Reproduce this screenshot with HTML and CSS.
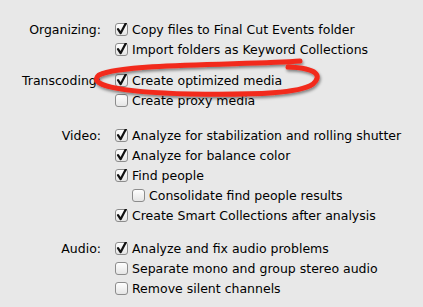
FILE: index.html
```html
<!DOCTYPE html>
<html lang="en">
<head>
    <meta charset="UTF-8">
    <title>Import Options</title>
    <link rel="stylesheet" href="styles.css">
</head>
<body>
<svg width="0" height="0" class="defs">
    <defs>
        <linearGradient id="boxfill" x1="0" y1="0" x2="0" y2="1">
            <stop offset="0" stop-color="#ffffff"/>
            <stop offset="1" stop-color="#e4e4e4"/>
        </linearGradient>
        <symbol id="box" viewBox="0 0 14 14">
            <rect x="0.5" y="0.5" width="12" height="12" rx="2.5" fill="url(#boxfill)" stroke="#8c8c8c"/>
        </symbol>
        <symbol id="tick" viewBox="0 0 14 14">
            <path d="M3 6.2 L5.6 10.2 L11.6 -1.2" fill="none" stroke="#111" stroke-width="2.2" stroke-linecap="round" stroke-linejoin="round"/>
        </symbol>
    </defs>
</svg>

<div class="prefs">
    <div class="group">
        <div class="label">Organizing:</div>
        <div class="options">
            <div class="opt"><span class="cb on"><svg><use href="#box"/><use href="#tick"/></svg></span>Copy files to Final Cut Events folder</div>
            <div class="opt"><span class="cb on"><svg><use href="#box"/><use href="#tick"/></svg></span>Import folders as Keyword Collections</div>
        </div>
    </div>

    <div class="group transcoding">
        <div class="label">Transcoding:</div>
        <div class="options">
            <div class="opt"><span class="cb on"><svg><use href="#box"/><use href="#tick"/></svg></span>Create optimized media</div>
            <div class="opt"><span class="cb"><svg><use href="#box"/></svg></span>Create proxy media</div>
        </div>
    </div>

    <div class="group video">
        <div class="label">Video:</div>
        <div class="options">
            <div class="opt"><span class="cb on"><svg><use href="#box"/><use href="#tick"/></svg></span>Analyze for stabilization and rolling shutter</div>
            <div class="opt"><span class="cb on"><svg><use href="#box"/><use href="#tick"/></svg></span>Analyze for balance color</div>
            <div class="opt"><span class="cb on"><svg><use href="#box"/><use href="#tick"/></svg></span>Find people</div>
            <div class="opt sub"><span class="cb"><svg><use href="#box"/></svg></span>Consolidate find people results</div>
            <div class="opt"><span class="cb on"><svg><use href="#box"/><use href="#tick"/></svg></span>Create Smart Collections after analysis</div>
        </div>
    </div>

    <div class="group audio">
        <div class="label">Audio:</div>
        <div class="options">
            <div class="opt"><span class="cb on"><svg><use href="#box"/><use href="#tick"/></svg></span>Analyze and fix audio problems</div>
            <div class="opt"><span class="cb"><svg><use href="#box"/></svg></span>Separate mono and group stereo audio</div>
            <div class="opt"><span class="cb"><svg><use href="#box"/></svg></span>Remove silent channels</div>
        </div>
    </div>
</div>

<svg class="scribble" width="423" height="307" viewBox="0 0 423 307">
    <defs>
        <filter id="shade" x="-10%" y="-30%" width="120%" height="160%">
            <feDropShadow dx="1" dy="2" stdDeviation="1.5" flood-color="#000" flood-opacity="0.45"/>
        </filter>
    </defs>
    <path d="M300 61 C 250 65, 125 63, 99 75 C 88 84, 112 92, 190 94 C 260 95, 300 93, 313 84 C 322 76, 318 68, 288 67"
          fill="none" stroke="#f22a1c" stroke-width="5" stroke-linecap="round" stroke-linejoin="round" filter="url(#shade)"/>
</svg>
</body>
</html>
```

FILE: styles.css
```css
body {
    margin: 0;
    background-color: #e8e8e8;
    color: #000;
    font-family: "DejaVu Sans", "Liberation Sans", sans-serif;
    font-size: 12.5px;
    width: 423px;
    height: 307px;
    overflow: hidden;
    position: relative;
}

.defs {
    position: absolute;
}

.prefs {
    padding-top: 20px;
}

.group {
    display: grid;
    grid-template-columns: 101px 1fr;
    column-gap: 14px;
}

.transcoding {
    margin-top: 11px;
}

.video {
    margin-top: 15px;
}

.audio {
    margin-top: 13px;
}

.label {
    text-align: right;
    height: 20px;
    line-height: 20px;
}

.options {
    display: flex;
    flex-direction: column;
}

.opt {
    height: 20px;
    line-height: 20px;
    display: flex;
    align-items: center;
    white-space: nowrap;
}

.opt.sub {
    padding-left: 17px;
}

.cb {
    width: 14px;
    height: 14px;
    margin-right: 3px;
    flex: none;
}

.cb svg {
    width: 14px;
    height: 14px;
    overflow: visible;
    display: block;
}

.scribble {
    position: absolute;
    left: 0;
    top: 0;
    pointer-events: none;
}
```
